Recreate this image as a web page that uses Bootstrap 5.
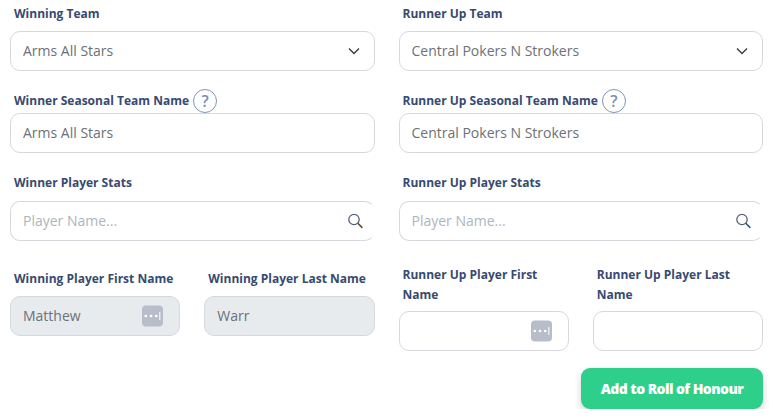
<!doctype html>
<html lang="en">
<head>
<meta charset="utf-8">
<title>Roll of Honour</title>
<link href="https://cdn.jsdelivr.net/npm/bootstrap@5.3.0/dist/css/bootstrap.min.css" rel="stylesheet">
<style>
html, body { background: #fff; overflow: hidden; }
body { font-family: "Open Sans", sans-serif; }
.page-wrap { padding: 4px 10px 0; }
.fld-label { display: block; font-size: 12px; font-weight: 700; line-height: 20px; color: #374a70; margin-bottom: 7px; padding-left: 4px; }
.fld-label.tight { margin-bottom: 0; height: 24px; line-height: 24px; display: flex; align-items: center; gap: 4px; }
.fld-label.roomy { margin-bottom: 8px; }
.fld-label.snug { margin-bottom: 6px; }
.form-control.fld, .form-select.fld { height: 40px; font-size: 14px; line-height: 20px; font-family: "Open Sans", sans-serif; color: #6c7177; border: 1px solid #d6d8de; border-radius: 10px; padding: 0 12px; box-shadow: none; }
.form-control.fld { padding-bottom: 2px; }
.form-select.fld { padding-right: 36px; background-image: url("data:image/svg+xml,%3csvg xmlns='http://www.w3.org/2000/svg' viewBox='0 0 12 8'%3e%3cpath fill='none' stroke='%23343a40' stroke-width='1.3' d='M1 1.5l5 5 5-5'/%3e%3c/svg%3e"); background-size: 12px 8px; background-position: right 14px center; }
.form-control.fld::placeholder { color: #adb5bd; opacity: 1; }
.form-control.fld:disabled { background: #e8ebee; color: #6c7177; opacity: 1; }
.form-control.fld.open-end { border-right-color: transparent; }
.help-dot { width: 24px; height: 24px; border: 1px solid #8093b8; border-radius: 50%; color: #7d90b5; font-size: 16px; font-weight: 600; display: inline-flex; align-items: center; justify-content: center; }
.gap-a { margin-bottom: 18px; }
.gap-b { margin-bottom: 20px; }
.gap-c { margin-bottom: 28px; }
.gap-d { margin-bottom: 24px; }
.over-icon { position: absolute; top: 50%; transform: translateY(-50%); }
.icon-search { right: 12px; width: 15px; height: 15px; }
.icon-key { right: 17px; width: 21px; height: 21px; background: #b8bec9; border-radius: 4px; display: block; }
.icon-key svg { display: block; }
.add-btn { width: 182px; height: 41px; background: #2ecf8b; border: 0; border-radius: 9px; color: #fff; font-size: 14px; font-weight: 800; letter-spacing: -.55px; box-shadow: 0 3px 7px rgba(0,0,0,.18); padding: 0; }
.add-btn:hover { background: #2ecf8b; color: #fff; }
.btn-row { margin-top: 17px; }
</style>
</head>
<body>
<div class="page-wrap">
  <form class="row gx-4">
    <div class="col-6">
      <label class="fld-label">Winning Team</label>
      <select class="form-select fld gap-a"><option>Arms All Stars</option></select>
      <label class="fld-label tight">Winner Seasonal Team Name <span class="help-dot">?</span></label>
      <input class="form-control fld gap-b" value="Arms All Stars">
      <label class="fld-label roomy">Winner Player Stats</label>
      <div class="position-relative gap-c">
        <input class="form-control fld open-end" placeholder="Player Name...">
        <svg class="over-icon icon-search" viewBox="0 0 15 15" fill="none"><circle cx="6" cy="6" r="5.2" stroke="#4f5e78" stroke-width="1.25"/><path d="M9.8 9.8 14.4 14.4" stroke="#5a4a3a" stroke-width="1.6"/></svg>
      </div>
      <div class="row gx-4">
        <div class="col-6">
          <label class="fld-label text-nowrap">Winning Player First Name</label>
          <div class="position-relative">
            <input class="form-control fld" value="Matthew" disabled>
            <span class="over-icon icon-key"><svg width="21" height="21" viewBox="0 0 21 21" fill="#fff"><circle cx="3.8" cy="10.5" r="1.35"/><circle cx="9" cy="10.5" r="1.35"/><circle cx="14.2" cy="10.5" r="1.35"/><rect x="17.3" y="6.5" width="1" height="8"/></svg></span>
          </div>
        </div>
        <div class="col-6">
          <label class="fld-label text-nowrap">Winning Player Last Name</label>
          <input class="form-control fld" value="Warr" disabled>
        </div>
      </div>
    </div>
    <div class="col-6">
      <label class="fld-label">Runner Up Team</label>
      <select class="form-select fld gap-a"><option>Central Pokers N Strokers</option></select>
      <label class="fld-label tight">Runner Up Seasonal Team Name <span class="help-dot">?</span></label>
      <input class="form-control fld gap-b" value="Central Pokers N Strokers">
      <label class="fld-label roomy">Runner Up Player Stats</label>
      <div class="position-relative gap-d">
        <input class="form-control fld open-end" placeholder="Player Name...">
        <svg class="over-icon icon-search" viewBox="0 0 15 15" fill="none"><circle cx="6" cy="6" r="5.2" stroke="#4f5e78" stroke-width="1.25"/><path d="M9.8 9.8 14.4 14.4" stroke="#2f5680" stroke-width="1.6"/></svg>
      </div>
      <div class="row gx-4">
        <div class="col-6">
          <label class="fld-label snug">Runner Up Player First Name</label>
          <div class="position-relative">
            <input class="form-control fld">
            <span class="over-icon icon-key"><svg width="21" height="21" viewBox="0 0 21 21" fill="#fff"><circle cx="3.8" cy="10.5" r="1.35"/><circle cx="9" cy="10.5" r="1.35"/><circle cx="14.2" cy="10.5" r="1.35"/><rect x="17.3" y="6.5" width="1" height="8"/></svg></span>
          </div>
        </div>
        <div class="col-6">
          <label class="fld-label snug">Runner Up Player Last Name</label>
          <input class="form-control fld">
        </div>
      </div>
      <div class="d-flex justify-content-end btn-row">
        <button type="button" class="btn add-btn">Add to Roll of Honour</button>
      </div>
    </div>
  </form>
</div>
<script src="https://cdn.jsdelivr.net/npm/bootstrap@5.3.0/dist/js/bootstrap.bundle.min.js"></script>
</body>
</html>
